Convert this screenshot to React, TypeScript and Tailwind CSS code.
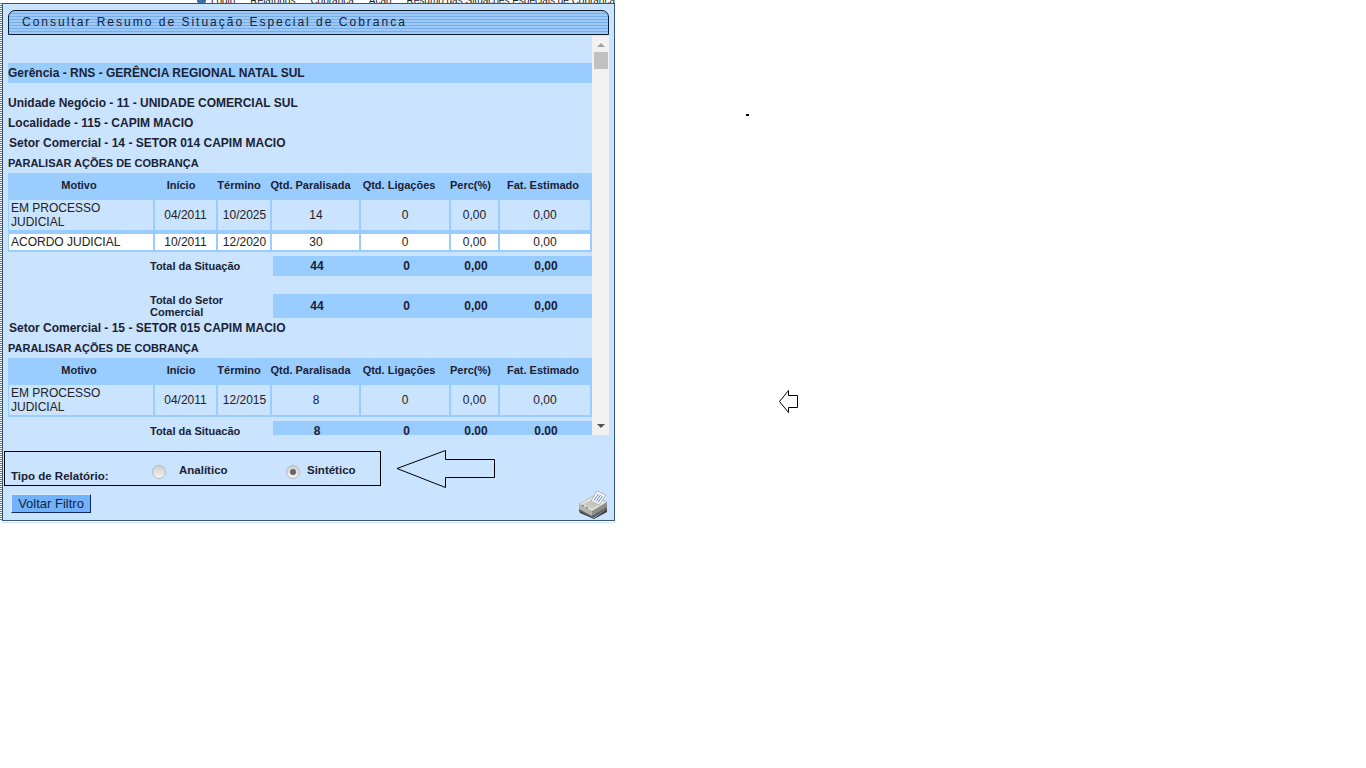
const cellCols = 'grid grid-cols-[144px_61px_52px_87px_88px_47px_90px] gap-x-[2px] pl-[1px]';
const headCols = 'grid grid-cols-[140px_64px_52px_91px_86px_57px_88px] pl-[1px]';
const totalCols = 'grid grid-cols-[88px_91px_48px_92px] ml-[265px] bg-[#99ccff] text-center text-[12px] font-bold items-center';

function SectionTable({ rows }: { rows: { motivo: string; inicio: string; termino: string; qtd: string; white?: boolean }[] }) {
  const headers = ['Motivo', 'Início', 'Término', 'Qtd. Paralisada', 'Qtd. Ligações', 'Perc(%)', 'Fat. Estimado'];
  return (
    <div className="bg-[#99ccff] pb-[2px]">
      <div className={`${headCols} h-[27px] items-center pb-[3px] text-center text-[11px] font-bold text-[#1a2233]`}>
        {headers.map((h) => (
          <div key={h} className="whitespace-nowrap">{h}</div>
        ))}
      </div>
      <div className="flex flex-col gap-y-[4px]">
        {rows.map((r) => {
          const cell = `flex items-center justify-center ${r.white ? 'bg-white h-[16px]' : 'bg-[#cae3ff] h-[30px]'}`;
          return (
            <div key={r.motivo} className={`${cellCols} text-[12px] leading-[14px] text-[#222]`}>
              <div className={`${cell} !justify-start pl-[2px]`}>{r.motivo}</div>
              <div className={cell}>{r.inicio}</div>
              <div className={`${cell} pl-[1px]`}>{r.termino}</div>
              <div className={`${cell} pl-[1px]`}>{r.qtd}</div>
              <div className={cell}>0</div>
              <div className={cell}>0,00</div>
              <div className={cell}>0,00</div>
            </div>
          );
        })}
      </div>
    </div>
  );
}

function TotalRow({ label, value, height }: { label: string; value: string; height: string }) {
  return (
    <div className={`relative ${height}`}>
      <div className="absolute left-[142px] top-0 flex h-full w-[110px] items-center text-[11px] font-bold leading-[12px] text-[#1a2233]">
        {label}
      </div>
      <div className={`${totalCols} h-full`}>
        <div>{value}</div>
        <div>0</div>
        <div>0,00</div>
        <div>0,00</div>
      </div>
    </div>
  );
}

function Line({ children }: { children: React.ReactNode }) {
  return <div className="flex h-[20px] items-center text-[12px] font-bold">{children}</div>;
}

function Radio({ checked }: { checked?: boolean }) {
  return (
    <div className="flex size-[14px] items-center justify-center rounded-full border border-[#b8b8b8] bg-gradient-to-b from-[#cfcfcf] to-[#f2f2f2]">
      {checked && <div className="size-[6px] rounded-full bg-[#666]" />}
    </div>
  );
}

function PrinterIcon() {
  return (
    <svg width="30" height="28" viewBox="0 0 30 28">
      {/* shadow and base */}
      <path d="M1 19 L16 27 L29 18 L29 21 L16 28 L2 22 Z" fill="#3c3c3c" />
      <path d="M1 13 L14 20 L14 26 L1 19 Z" fill="#b4b4ae" />
      <path d="M14 20 L29 11 L29 17 L14 26 Z" fill="#8c8c88" />
      <path d="M1 18 L14 25 L29 16 L29 18 L15 27 L1 20 Z" fill="#5e5e5e" />
      {/* top */}
      <path d="M1 13 L14 20 L29 11 L15 5 Z" fill="#e4e6de" stroke="#a0a098" strokeWidth="0.6" />
      <path d="M5 13 L14 18 L22 13 L14 9 Z" fill="#c6c8c0" />
      {/* paper */}
      <path d="M13 10 L19 0 L28 4 L21 14 Z" fill="#f6f8fc" stroke="#8a94a4" strokeWidth="0.6" />
      <path d="M16 9.5 L20.5 3 M18 10.5 L22.5 4 M20 11.5 L24.5 5" stroke="#6f86b4" strokeWidth="1" />
      {/* lights */}
      <path d="M4 14 L6 15" stroke="#d05050" strokeWidth="1.2" />
      <path d="M8 16 L10 17" stroke="#50a050" strokeWidth="1.2" />
    </svg>
  );
}

function Arrow() {
  return (
    <svg className="absolute left-[390px] top-[445px]" width="110" height="48" viewBox="0 0 110 48">
      <path d="M7 23.5 L55.5 5.5 V14.5 H104.5 V32.5 H55.5 V42.5 Z" fill="none" stroke="#000" strokeWidth="1" />
    </svg>
  );
}

function SmallArrow() {
  return (
    <svg className="absolute left-[775px] top-[387px]" width="26" height="28" viewBox="0 0 26 28">
      <path d="M4.5 14.5 L13.5 3.5 V8.5 H22.5 V20.5 H13.5 V25.5 Z" fill="#fff" stroke="#000" strokeWidth="1" />
    </svg>
  );
}

export default function App() {
  return (
    <div className="relative h-[768px] w-[1366px] overflow-hidden bg-white font-['Liberation_Sans',Arial,sans-serif] text-[#1a2233]">
      {/* cut off breadcrumb above the panel */}
      <div className="flex h-[3px] w-[615px] items-end justify-end overflow-hidden">
        <div className="mb-[-4px] flex shrink-0 items-center gap-[15px] whitespace-nowrap text-[10px] leading-[13px] text-[#222]">
          <span className="-mr-[10px] size-[9px] rounded-full bg-[#3f6fa8]" />
          <span>Login</span>
          <span>Relatórios</span>
          <span>Cobrança</span>
          <span>Ação</span>
          <span>Resumo das Situações Especiais de Cobrança</span>
        </div>
      </div>

      <div className="flex items-stretch">
        <div className="w-[2px] bg-[repeating-linear-gradient(180deg,#5d7fa3_0,#5d7fa3_1px,#ffffff_1px,#ffffff_2px)]" />
        <div className="h-[518px] w-[613px] border border-[#34567a] bg-[#cae3ff]">
          <div className="h-[32px] px-[5px] pt-[6px]">
            <div className="flex h-[25px] w-[601px] items-center rounded-t-[7px] border border-[#0e1c30] bg-[repeating-linear-gradient(180deg,#9cc9f7_0,#9cc9f7_2px,#77aeea_2px,#77aeea_3px)] pb-[1px] pl-[13px] text-[12px] tracking-[2px] text-[#12233c]">
              Consultar Resumo de Situação Especial de Cobranca
            </div>
          </div>

          <div className="flex h-[399px]">
            <div className="h-full w-[589px] overflow-hidden pl-[5px] pt-[27px]">
              <div className="flex h-[20px] items-center bg-[#99ccff] text-[12px] font-bold">
                Gerência - RNS - GERÊNCIA REGIONAL NATAL SUL
              </div>
              <div className="h-[10px]" />
              <Line>Unidade Negócio - 11 - UNIDADE COMERCIAL SUL</Line>
              <Line>Localidade - 115 - CAPIM MACIO</Line>
              <Line><span className="pl-[1px]">Setor Comercial - 14 - SETOR 014 CAPIM MACIO</span></Line>
              <div className="flex h-[20px] items-center text-[11px] font-bold">PARALISAR AÇÕES DE COBRANÇA</div>
              <SectionTable
                rows={[
                  { motivo: 'EM PROCESSO JUDICIAL', inicio: '04/2011', termino: '10/2025', qtd: '14' },
                  { motivo: 'ACORDO JUDICIAL', inicio: '10/2011', termino: '12/2020', qtd: '30', white: true },
                ]}
              />
              <div className="h-[4px]" />
              <TotalRow label="Total da Situação" value="44" height="h-[20px]" />
              <div className="h-[18px]" />
              <TotalRow label="Total do Setor Comercial" value="44" height="h-[24px]" />
              <Line><span className="pl-[1px]">Setor Comercial - 15 - SETOR 015 CAPIM MACIO</span></Line>
              <div className="flex h-[20px] items-center text-[11px] font-bold">PARALISAR AÇÕES DE COBRANÇA</div>
              <SectionTable rows={[{ motivo: 'EM PROCESSO JUDICIAL', inicio: '04/2011', termino: '12/2015', qtd: '8' }]} />
              <div className="h-[4px]" />
              <TotalRow label="Total da Situação" value="8" height="h-[20px]" />
            </div>

            {/* scrollbar */}
            <div className="flex h-full w-[17px] flex-col items-center bg-[#f1f1f1]">
              <div className="flex h-[16px] w-full items-center justify-center pt-[1px]">
                <div className="size-0 border-x-[4px] border-b-[4px] border-x-transparent border-b-[#a3a3a3]" />
              </div>
              <div className="h-[17px] w-[14px] bg-[#c1c1c1]" />
              <div className="flex-1" />
              <div className="flex h-[18px] w-full items-center justify-center">
                <div className="size-0 border-x-[4px] border-t-[4px] border-x-transparent border-t-[#505050]" />
              </div>
            </div>
          </div>

          <div className="ml-[1px] mt-[16px] flex h-[35px] w-[377px] border border-black text-[11.5px] font-bold">
            <div className="ml-[6px] mt-[16px] w-[141px]">Tipo de Relatório:</div>
            <div className="mt-[13px]"><Radio /></div>
            <div className="ml-[13px] mt-[10px] w-[107px]">Analítico</div>
            <div className="mt-[13px]"><Radio checked /></div>
            <div className="ml-[7px] mt-[10px]">Sintético</div>
          </div>

          <div className="flex items-start justify-between pl-[8px] pr-[6px]">
            <button className="mt-[8px] h-[19px] w-[80px] border border-b-[#0e2a5c] border-l-[#dcecff] border-r-[#0e2a5c] border-t-[#dcecff] bg-[#72b2fb] text-[13px] leading-[15px] text-[#14233f]">
              Voltar Filtro
            </button>
            <div className="mt-[5px]"><PrinterIcon /></div>
          </div>
        </div>
      </div>
      <div className="ml-[2px] mt-[1px] h-[1px] w-[613px] bg-[#cfe3ee]" />

      <Arrow />
      <SmallArrow />
      <div className="absolute left-[746px] top-[114px] h-[2px] w-[3px] bg-black" />
    </div>
  );
}
